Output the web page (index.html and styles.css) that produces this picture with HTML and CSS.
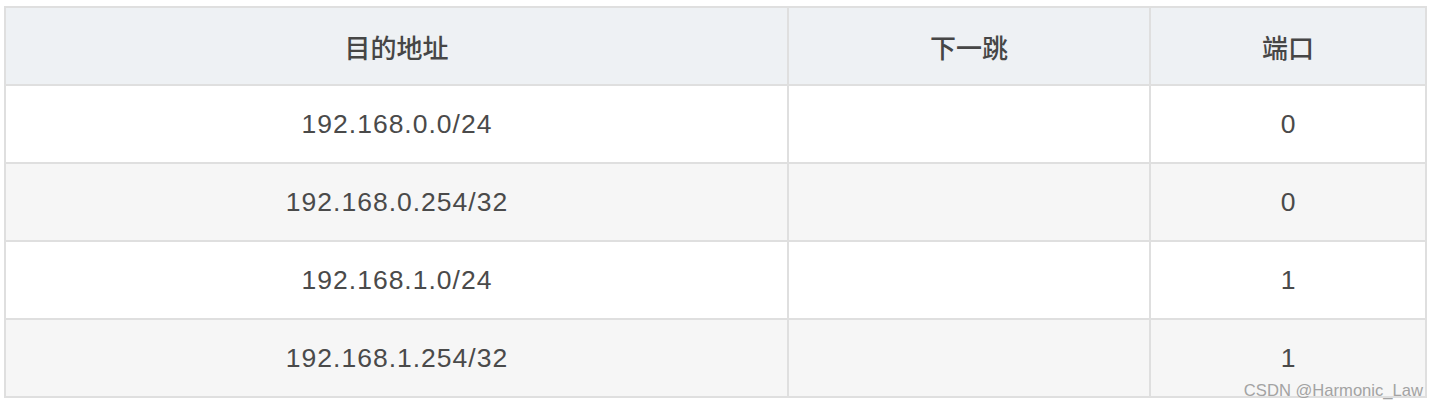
FILE: index.html
```html
<!DOCTYPE html>
<html lang="zh">
<head>
<meta charset="utf-8">
<link rel="stylesheet" href="styles.css">
</head>
<body>
<div class="wrap">
  <table class="route">
    <thead>
      <tr>
        <th class="c1">目的地址</th>
        <th class="c2">下一跳</th>
        <th class="c3">端口</th>
      </tr>
    </thead>
    <tbody>
      <tr>
        <td class="c1">192.168.0.0/24</td>
        <td class="c2"></td>
        <td class="c3">0</td>
      </tr>
      <tr class="alt">
        <td class="c1">192.168.0.254/32</td>
        <td class="c2"></td>
        <td class="c3">0</td>
      </tr>
      <tr>
        <td class="c1">192.168.1.0/24</td>
        <td class="c2"></td>
        <td class="c3">1</td>
      </tr>
      <tr class="alt">
        <td class="c1">192.168.1.254/32</td>
        <td class="c2"></td>
        <td class="c3">1</td>
      </tr>
    </tbody>
  </table>
  <div class="watermark">CSDN @Harmonic_Law</div>
</div>
</body>
</html>
```

FILE: styles.css
```css
html, body {
  margin: 0;
  padding: 0;
  background: #ffffff;
}

.wrap {
  position: relative;
  width: 1438px;
  height: 408px;
  padding: 6px 0 0 4px;
  box-sizing: border-box;
}

.route {
  border-collapse: separate;
  border-spacing: 0;
  table-layout: fixed;
  width: 1423px;
  border-top: 2px solid #dfdfdf;
  border-left: 2px solid #dfdfdf;
  font-family: "Liberation Sans", "Noto Sans CJK SC", sans-serif;
  font-size: 26px;
  color: #4a4a4a;
}

.route th,
.route td {
  box-sizing: border-box;
  height: 78px;
  padding: 0;
  border-right: 2px solid #dfdfdf;
  border-bottom: 2px solid #dfdfdf;
  text-align: center;
  vertical-align: middle;
}

.route th {
  background: #eef1f4;
  font-family: "Noto Sans CJK SC", sans-serif;
  font-weight: 500;
  color: #464646;
}

.route td {
  background: #ffffff;
  font-size: 26.5px;
  letter-spacing: 1px;
  padding-left: 1px;
}

.route tr.alt td {
  background: #f6f6f6;
}

.c1 { width: 783px; }
.c2 { width: 362px; }
.c3 { width: 276px; }

.watermark {
  position: absolute;
  right: 15px;
  top: 382px;
  font-family: "Liberation Sans", sans-serif;
  font-size: 16.6px;
  line-height: 17px;
  color: #a3a3a3;
  white-space: nowrap;
}
```
